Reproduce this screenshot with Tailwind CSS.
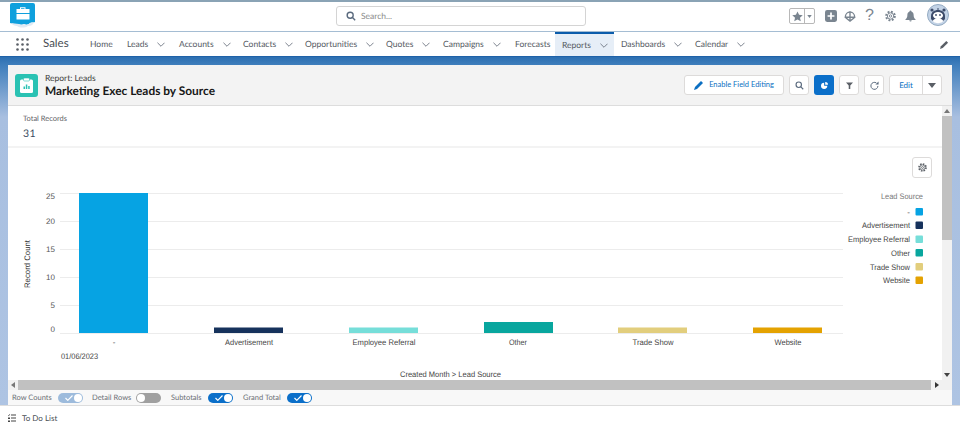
<!DOCTYPE html>
<html><head><meta charset="utf-8"><script src="https://cdn.jsdelivr.net/npm/@tailwindcss/browser@4"></script></head>
<body class="w-[960px] h-[430px] overflow-hidden bg-white font-['Lato',sans-serif] text-[#54698d] [text-rendering:geometricPrecision]">
<div class="flex flex-col h-[430px]">
  <header class="h-[32px] shrink-0 bg-white border-t-2 border-t-[#8aa3b5] border-b border-b-[#a5bdd3] flex items-center relative">
    <svg class="absolute left-[10px] top-[1px]" width="26" height="25" viewBox="0 0 26 25"><path d="M2 0h21a2 2 0 0 1 2 2v17c-2 1-3 0-5 1-2 2-4 2-6 1-2 1-4 1-6 0-2 0-6 0-8-1V2a2 2 0 0 1 2-2z" fill="#0fa0dd"/><path d="M1 20c2 0 5 1 8 1 2 1 4 1 5 0 2 1 4 1 6-1l4-1c-1 3-3 4-6 4-3 2-8 2-11 0-2 0-5-1-6-3z" fill="#dfeaf4"/><path d="M10 6V4.200h5.500V6h4v4h-13V6zM11 6h3.500V5.200H11z" fill="#fff" fill-rule="evenodd"/><path d="M6.500 11h13v5.500h-13z" fill="#fff"/></svg>
    <div class="absolute left-[336px] top-[4px] w-[250px] h-[20px] bg-white border border-[#d4d4d4] rounded-[3px] flex items-center pl-[9px] gap-[5px]">
      <svg width="10" height="10" viewBox="0 0 12 12" fill="none" stroke="#5a6a7e" stroke-width="1.700"><circle cx="5" cy="5" r="3.600"/><path d="M7.800 7.800 11 11"/></svg>
      <span class="text-[8.500px] text-[#8a8a8a]">Search...</span>
    </div>
    <div class="absolute left-[789px] top-[6px] h-[16px] w-[26px] border border-[#b8b8b8] rounded-[2px] flex">
      <div class="w-[15px] border-r border-[#b8b8b8] flex items-center justify-center"><svg width="11" height="11" viewBox="0 0 12 12"><path d="M6 .5l1.700 3.700 4 .4-3 2.700.9 4L6 9.300l-3.600 2 .9-4-3-2.700 4-.4z" fill="#7a8590"/></svg></div>
      <div class="flex-1 flex items-center justify-center"><svg width="5" height="3" viewBox="0 0 6 4"><path d="M0 0h6L3 4z" fill="#7a8590"/></svg></div>
    </div>
    <svg class="absolute left-[825px] top-[8px]" width="12" height="12" viewBox="0 0 14 14"><rect width="14" height="14" rx="2.500" fill="#7a8590"/><path d="M7 3v8M3 7h8" stroke="#fff" stroke-width="2"/></svg>
    <svg class="absolute left-[844px] top-[8px]" width="12" height="12" viewBox="0 0 14 14" fill="none" stroke="#7a8590" stroke-width="1.600"><path d="M1.500 8.500c0-8 11-8 11 0z"/><path d="M7 1.500V13M2 9l5 4 5-4"/></svg>
    <span class="absolute left-[865px] top-[4px] text-[16px] leading-[20px] text-[#7a8590] font-['Liberation_Sans',sans-serif]">?</span>
    <svg class="absolute left-[885px] top-[8px]" width="11" height="12" viewBox="0 0 14 14" fill="none" stroke="#7a8590"><circle cx="7" cy="7" r="5.500" stroke-width="2.500" stroke-dasharray="2.400 1.900"/><circle cx="7" cy="7" r="4" stroke-width="1.200"/><circle cx="7" cy="7" r="1.500" stroke-width="1.200"/></svg>
    <svg class="absolute left-[905px] top-[8px]" width="11" height="12" viewBox="0 0 14 14"><path d="M7 0a1.200 1.200 0 0 1 1.200 1.200C10.500 2 11 4 11 6c0 3 1 4 2.500 5.500v.5H.5v-.5C2 10 3 9 3 6c0-2 .5-4 2.800-4.800A1.200 1.200 0 0 1 7 0zM5.500 12.500h3A1.500 1.500 0 0 1 5.500 12.500z" fill="#7a8590"/></svg>
    <svg class="absolute left-[927px] top-[2px]" width="22" height="22" viewBox="0 0 22 22"><circle cx="11" cy="11" r="10.500" fill="#c3d3e6" stroke="#93aac2"/><circle cx="5" cy="6" r="1.600" fill="#3d4c6a"/><circle cx="17" cy="6" r="1.600" fill="#3d4c6a"/><path d="M11 4v2" stroke="#3d4c6a"/><path d="M4 12c0-8 14-8 14 0v3c-4 5-10 5-14 0z" fill="#3d4c6a"/><path d="M5.500 17c3-4 8-4 11 0-3 3-8 3-11 0z" fill="#fff"/><ellipse cx="11" cy="11.500" rx="5" ry="3.500" fill="#fff"/><circle cx="9" cy="11" r=".9" fill="#3d4c6a"/><circle cx="13" cy="11" r=".9" fill="#3d4c6a"/></svg>
  </header>
  <nav class="h-[24px] shrink-0 bg-white flex items-center text-[8.500px] leading-[24px] text-[#54595f]">
    <div class="w-[43px] shrink-0 pl-[16px]"><svg class="block" width="13" height="13" viewBox="0 0 13 13" fill="#5a5f66"><circle cx="1.500" cy="1.500" r="1.300"/><circle cx="6.500" cy="1.500" r="1.300"/><circle cx="11.500" cy="1.500" r="1.300"/><circle cx="1.500" cy="6.500" r="1.300"/><circle cx="6.500" cy="6.500" r="1.300"/><circle cx="11.500" cy="6.500" r="1.300"/><circle cx="1.500" cy="11.500" r="1.300"/><circle cx="6.500" cy="11.500" r="1.300"/><circle cx="11.500" cy="11.500" r="1.300"/></svg></div>
    <span class="w-[47px] shrink-0 text-[11.500px] text-[#4a4f55]">Sales</span>
    <span class="w-[37px] shrink-0">Home</span>
    <span class="w-[52px] shrink-0 flex items-center">Leads<svg class="ml-[9px]" width="8" height="5" viewBox="0 0 9 5" fill="none" stroke="#6b7280"><path d="M.5.500 4.500 4.500 8.500.500"/></svg></span>
    <span class="w-[64px] shrink-0 flex items-center">Accounts<svg class="ml-[9px]" width="8" height="5" viewBox="0 0 9 5" fill="none" stroke="#6b7280"><path d="M.5.500 4.500 4.500 8.500.500"/></svg></span>
    <span class="w-[62px] shrink-0 flex items-center">Contacts<svg class="ml-[9px]" width="8" height="5" viewBox="0 0 9 5" fill="none" stroke="#6b7280"><path d="M.5.500 4.500 4.500 8.500.500"/></svg></span>
    <span class="w-[81px] shrink-0 flex items-center">Opportunities<svg class="ml-[9px]" width="8" height="5" viewBox="0 0 9 5" fill="none" stroke="#6b7280"><path d="M.5.500 4.500 4.500 8.500.500"/></svg></span>
    <span class="w-[57px] shrink-0 flex items-center">Quotes<svg class="ml-[9px]" width="8" height="5" viewBox="0 0 9 5" fill="none" stroke="#6b7280"><path d="M.5.500 4.500 4.500 8.500.500"/></svg></span>
    <span class="w-[72px] shrink-0 flex items-center">Campaigns<svg class="ml-[9px]" width="8" height="5" viewBox="0 0 9 5" fill="none" stroke="#6b7280"><path d="M.5.500 4.500 4.500 8.500.500"/></svg></span>
    <span class="w-[40px] shrink-0">Forecasts</span>
    <span class="w-[59px] h-[24px] shrink-0 pl-[7px] flex items-center bg-[#e6eef7] border-t-2 border-t-[#0b5cab] leading-[20px]">Reports<svg class="ml-[9px]" width="8" height="5" viewBox="0 0 9 5" fill="none" stroke="#6b7280"><path d="M.5.500 4.500 4.500 8.500.500"/></svg></span>
    <span class="w-[81px] pl-[7px] shrink-0 flex items-center">Dashboards<svg class="ml-[9px]" width="8" height="5" viewBox="0 0 9 5" fill="none" stroke="#6b7280"><path d="M.5.500 4.500 4.500 8.500.500"/></svg></span>
    <span class="flex items-center">Calendar<svg class="ml-[9px]" width="8" height="5" viewBox="0 0 9 5" fill="none" stroke="#6b7280"><path d="M.5.500 4.500 4.500 8.500.500"/></svg></span>
    <svg class="ml-auto mr-[11px]" width="9" height="9" viewBox="0 0 10 10"><path d="M0 10l1-3 6-6 2 2-6 6z" fill="#5a5f66"/></svg>
  </nav>
  <main class="flex-1 min-h-0 bg-[linear-gradient(180deg,#2c6fb1_0px,#3f7ebc_8px,#a8bfe0_60px,#aec4e3_100%)] border-t border-t-[#1f62a8] px-[8px] pt-[8px]">
    <div class="h-[340px] bg-white flex flex-col">
      <div class="h-[41px] shrink-0 bg-[#f3f3f3] border-b border-[#dddddd] flex items-center pl-[7px] pr-[10px]">
        <div class="w-[23px] h-[23px] bg-[#2ac2b3] rounded-[3px] flex items-center justify-center"><svg width="13" height="15" viewBox="0 0 13 15"><rect y="1.500" width="13" height="13.500" rx="1.500" fill="#fff"/><rect x="3.500" y="0" width="6" height="3" rx="1" fill="#fff" stroke="#2ac2b3" stroke-width=".6"/><path d="M3.500 11V8.500h1.500V11zM5.800 11V6.500h1.500V11zM8.200 11V8h1.500v3z" fill="#2ac2b3"/></svg></div>
        <div class="ml-[7px]">
          <div class="text-[8.500px] leading-[11px] text-[#3e3e3c]">Report: Leads</div>
          <div class="text-[11.900px] leading-[13px] font-bold text-[#181818]">Marketing Exec Leads by Source</div>
        </div>
        <div class="ml-auto flex items-center">
          <button class="w-[100px] h-[20px] bg-white border border-[#dddbda] rounded-[3px] flex items-center justify-center gap-[5px] text-[7.500px] text-[#0b6fc2]"><svg width="10" height="10" viewBox="0 0 10 10"><path d="M0 10l1-3 6-6 2 2-6 6z" fill="#0b6fc2"/></svg>Enable Field Editing</button>
          <button class="ml-[5px] w-[20px] h-[20px] bg-white border border-[#dddbda] rounded-[3px] flex items-center justify-center"><svg width="9" height="9" viewBox="0 0 12 12" fill="none" stroke="#5a6a7e" stroke-width="1.500"><circle cx="5" cy="5" r="3.600"/><path d="M7.800 7.800 11 11"/></svg></button>
          <button class="ml-[5px] w-[20px] h-[20px] bg-[#0b6fc9] rounded-[3px] flex items-center justify-center"><svg width="7" height="7" viewBox="0 0 10 10"><path d="M4.500 1v4.500H9A4.500 4.500 0 1 1 4.500 1z" fill="#fff"/><path d="M6 0a4 4 0 0 1 4 4H6z" fill="#fff"/></svg></button>
          <button class="ml-[5px] w-[20px] h-[20px] bg-white border border-[#dddbda] rounded-[3px] flex items-center justify-center"><svg width="7" height="7" viewBox="0 0 9 9"><path d="M0 .5h9L5.500 4.500V9h-2V4.500z" fill="#5a5f66"/></svg></button>
          <button class="ml-[5px] w-[20px] h-[20px] bg-white border border-[#dddbda] rounded-[3px] flex items-center justify-center"><svg width="9" height="9" viewBox="0 0 10 10" fill="none" stroke="#5a6a7e" stroke-width="1.100"><path d="M8.800 5.500A3.900 3.900 0 1 1 7 2.100"/><path d="M9.500.5V4H6z" fill="#5a6a7e" stroke="none"/></svg></button>
          <div class="ml-[5px] w-[53px] h-[20px] bg-white border border-[#dddbda] rounded-[3px] flex">
            <span class="w-[33px] border-r border-[#dddbda] text-center text-[8px] leading-[18px] text-[#0b6fc2]">Edit</span>
            <span class="flex-1 flex items-center justify-center"><svg width="8" height="5" viewBox="0 0 8 5"><path d="M0 0h8L4 5z" fill="#5a5f66"/></svg></span>
          </div>
        </div>
      </div>
      <div class="flex-1 min-h-0 flex flex-col">
        <div class="flex-1 min-h-0 flex">
          <div class="flex-1 min-w-0 flex flex-col">
            <div class="h-[42px] shrink-0 border-b-2 border-[#f3f3f3] pl-[15px] pt-[7px]">
              <div class="text-[7.500px] leading-[11px] text-[#5f6368]">Total Records</div>
              <div class="text-[10.500px] leading-[16px] mt-[2px] text-[#3a4a5e] tracking-[0.5px]">31</div>
            </div>
            <div class="flex-1 relative">
              <svg class="absolute left-0 top-0" width="934" height="232" viewBox="8 148 934 232" font-family="Liberation Sans, sans-serif" font-size="8" fill="#444" lengthAdjust="spacingAndGlyphs">
                <g stroke="#ececec" stroke-width="1"><path d="M60 193.500H843M60 221.500H843M60 249.500H843M60 277.500H843M60 305.500H843M60 333.500H843"/></g>
                <g fill="#555" text-anchor="end"><text x="55" y="199">25</text><text x="55" y="224">20</text><text x="55" y="252">15</text><text x="55" y="280">10</text><text x="55" y="308">5</text><text x="55" y="332">0</text></g>
                <text transform="translate(30 264) rotate(-90)" text-anchor="middle" fill="#333" textLength="48" lengthAdjust="spacingAndGlyphs">Record Count</text>
                <rect x="79" y="193" width="69" height="140" fill="#06a3e3"/>
                <rect x="214" y="327.500" width="69" height="5.500" fill="#16325c"/>
                <rect x="349" y="327.500" width="69" height="5.500" fill="#76ded9"/>
                <rect x="484" y="322" width="69" height="11" fill="#08a69e"/>
                <rect x="618" y="327.500" width="69" height="5.500" fill="#e2ce7d"/>
                <rect x="753" y="327.500" width="69" height="5.500" fill="#e4a201"/>
                <g text-anchor="middle"><text x="114" y="345">-</text><text x="249" y="345" textLength="48" lengthAdjust="spacingAndGlyphs">Advertisement</text><text x="384" y="345" textLength="63" lengthAdjust="spacingAndGlyphs">Employee Referral</text><text x="518" y="345" textLength="18" lengthAdjust="spacingAndGlyphs">Other</text><text x="653" y="345" textLength="41" lengthAdjust="spacingAndGlyphs">Trade Show</text><text x="788" y="345" textLength="27" lengthAdjust="spacingAndGlyphs">Website</text></g>
                <text x="61" y="359" textLength="37" lengthAdjust="spacingAndGlyphs">01/06/2023</text>
                <text x="450.500" y="377" text-anchor="middle" textLength="101" lengthAdjust="spacingAndGlyphs">Created Month &gt; Lead Source</text>
                <text x="923" y="199" text-anchor="end" fill="#777" textLength="42" lengthAdjust="spacingAndGlyphs">Lead Source</text>
                <g text-anchor="end"><text x="910" y="215">-</text><text x="910" y="228" textLength="48" lengthAdjust="spacingAndGlyphs">Advertisement</text><text x="910" y="242" textLength="62" lengthAdjust="spacingAndGlyphs">Employee Referral</text><text x="910" y="256" textLength="19" lengthAdjust="spacingAndGlyphs">Other</text><text x="910" y="270" textLength="40" lengthAdjust="spacingAndGlyphs">Trade Show</text><text x="910" y="283" textLength="27" lengthAdjust="spacingAndGlyphs">Website</text></g>
                <rect x="915.500" y="208" width="7.500" height="7.500" rx="1" fill="#06a3e3"/>
                <rect x="915.500" y="221.500" width="7.500" height="7.500" rx="1" fill="#16325c"/>
                <rect x="915.500" y="235.500" width="7.500" height="7.500" rx="1" fill="#76ded9"/>
                <rect x="915.500" y="249" width="7.500" height="7.500" rx="1" fill="#08a69e"/>
                <rect x="915.500" y="263" width="7.500" height="7.500" rx="1" fill="#e2ce7d"/>
                <rect x="915.500" y="276.500" width="7.500" height="7.500" rx="1" fill="#e4a201"/>
              </svg>
              <button class="absolute left-[904px] top-[9px] w-[20px] h-[21px] bg-white border border-[#dddbda] rounded-[3px] flex items-center justify-center"><svg width="9" height="9" viewBox="0 0 14 14" fill="none" stroke="#5a5f66"><circle cx="7" cy="7" r="5.500" stroke-width="2.500" stroke-dasharray="2.400 1.900"/><circle cx="7" cy="7" r="4" stroke-width="1.200"/><circle cx="7" cy="7" r="1.500" stroke-width="1.200"/></svg></button>
            </div>
          </div>
          <div class="w-[10px] shrink-0 bg-[#f1f1f1] flex flex-col">
            <div class="h-[10px] flex items-center justify-center"><svg width="6" height="4" viewBox="0 0 6 4"><path d="M0 4h6L3 0z" fill="#777"/></svg></div>
            <div class="h-[124px] bg-[#c1c1c1]"></div>
            <div class="mt-auto h-[10px] flex items-center justify-center"><svg width="6" height="4" viewBox="0 0 6 4"><path d="M0 0h6L3 4z" fill="#444"/></svg></div>
          </div>
        </div>
        <div class="h-[10px] shrink-0 bg-[#f1f1f1] flex">
          <div class="w-[10px] flex items-center justify-center"><svg width="4" height="6" viewBox="0 0 4 6"><path d="M4 0v6L0 3z" fill="#777"/></svg></div>
          <div class="w-[913px] bg-[#c1c1c1]"></div>
          <div class="w-[11px] flex items-center justify-center"><svg width="4" height="6" viewBox="0 0 4 6"><path d="M0 0v6l4-3z" fill="#333"/></svg></div>
        </div>
        <div class="h-[15px] shrink-0 bg-[#f8f8f8] flex items-center pl-[4px] text-[7.500px] text-[#6b6f75] whitespace-nowrap">
          <span class="w-[46px]">Row Counts</span>
          <span class="w-[25px] h-[10px] rounded-full bg-[#9dbbdc] flex items-center justify-between px-[1px]"><svg class="ml-[6px]" width="8" height="6" viewBox="0 0 8 6" fill="none" stroke="#fff" stroke-width="1.200"><path d="M.5 3l2.300 2.300L7.500.5"/></svg><span class="w-[8px] h-[8px] rounded-full bg-white"></span></span>
          <span class="ml-[9px] w-[44px]">Detail Rows</span>
          <span class="w-[25px] h-[10px] rounded-full bg-[#a0a0a0] flex items-center px-[1px]"><span class="w-[8px] h-[8px] rounded-full bg-white"></span></span>
          <span class="ml-[10px] w-[37px]">Subtotals</span>
          <span class="w-[25px] h-[10px] rounded-full bg-[#0b6fc9] flex items-center justify-between px-[1px]"><svg class="ml-[6px]" width="8" height="6" viewBox="0 0 8 6" fill="none" stroke="#fff" stroke-width="1.200"><path d="M.5 3l2.300 2.300L7.500.5"/></svg><span class="w-[8px] h-[8px] rounded-full bg-white"></span></span>
          <span class="ml-[10px] w-[44px]">Grand Total</span>
          <span class="w-[25px] h-[10px] rounded-full bg-[#0b6fc9] flex items-center justify-between px-[1px]"><svg class="ml-[6px]" width="8" height="6" viewBox="0 0 8 6" fill="none" stroke="#fff" stroke-width="1.200"><path d="M.5 3l2.300 2.300L7.500.5"/></svg><span class="w-[8px] h-[8px] rounded-full bg-white"></span></span>
        </div>
      </div>
    </div>
  </main>
  <footer class="h-[25px] shrink-0 bg-white border-t border-[#dddddd] flex items-center pl-[8px] text-[8px] text-[#4a4f55]">
    <svg width="8" height="8" viewBox="0 0 8 8" class="mr-[6px]" fill="#444"><path d="M3 .5h5v1H3zM3 3.500h5v1H3zM3 6.500h5v1H3zM0 1l.6.600L1.800 0l.4.400L.6 2.300 0 1.500zM0 3.500h2v1.500H0zM0 6.500h2V8H0z"/></svg>To Do List
  </footer>
</div>
</body></html>
